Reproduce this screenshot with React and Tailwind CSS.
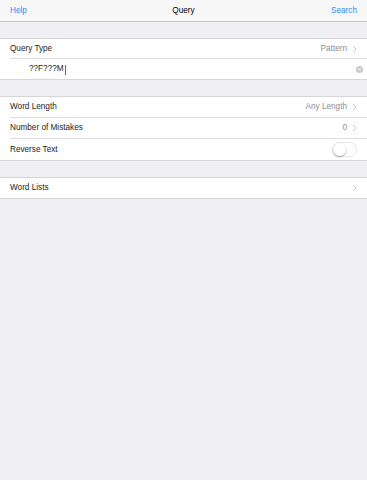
import React, { useState } from "react";

const Chevron = () => (
  <svg width="5" height="8" viewBox="0 0 5 8" className="ml-[5px] shrink-0">
    <path d="M1 1l3 3-3 3" fill="none" stroke="#c7c7cc" strokeWidth="1" />
  </svg>
);

const Row = ({ label, value, chevron = true, last = false, tall = false, children }) => (
  <div
    className={`flex items-stretch bg-white pl-[10px] ${
      tall ? "h-[21px]" : "h-[20px]"
    }`}
  >
    <div
      className={`flex flex-1 items-center pr-[10px] ${
        last ? "" : "border-b border-[#dcdce0]"
      }`}
    >
      <span className="flex-1 pt-[1px] text-[#222]">{label}</span>
      {value && <span className="pt-[1px] text-[#8e8e93]">{value}</span>}
      {chevron && <Chevron />}
      {children}
    </div>
  </div>
);

const Group = ({ children }) => (
  <div className="border-y border-[#d6d6da] bg-white">{children}</div>
);

export default function App() {
  const [reverse, setReverse] = useState(false);

  return (
    <div
      className="min-h-[480px] w-full bg-[#efeff4] text-[8.2px] leading-none"
      style={{ fontFamily: '"Liberation Sans", Arial, sans-serif' }}
    >
      {/* Nav bar */}
      <div className="relative flex h-[22px] items-center justify-between border-b border-[#c4c4c8] bg-[#f7f7f7] px-[10px] pt-[1px]">
        <span className="text-[#2a8af8]">Help</span>
        <span className="absolute left-1/2 -translate-x-1/2 text-black">
          Query
        </span>
        <span className="text-[#2a8af8]">Search</span>
      </div>

      <div className="h-[16px]" />

      <Group>
        <Row label="Query Type" value="Pattern" />
        <div className="flex h-[20px] items-center bg-white pl-[29px] pr-[4px]">
          <span className="flex flex-1 items-center pt-[1px] text-[#222]">
            ??F???M
            <span className="ml-[1px] inline-block h-[10px] w-[1px] bg-[#007aff]" />
          </span>
          <span className="flex h-[7px] w-[7px] items-center justify-center rounded-full bg-[#c7c7cc]">
            <svg width="3" height="3" viewBox="0 0 3 3">
              <path d="M0 0l3 3M3 0l-3 3" stroke="#fff" strokeWidth="0.8" />
            </svg>
          </span>
        </div>
      </Group>

      <div className="h-[16px]" />

      <Group>
        <Row label="Word Length" value="Any Length" tall />
        <Row label="Number of Mistakes" value="0" tall />
        <Row label="Reverse Text" chevron={false} last tall>
          <button
            onClick={() => setReverse(!reverse)}
            className={`relative h-[15px] w-[25px] rounded-full border ${
              reverse ? "border-[#4cd964] bg-[#4cd964]" : "border-[#e5e5ea] bg-white"
            }`}
          >
            <span
              className={`absolute top-0 h-[13px] w-[13px] rounded-full bg-white shadow-[0_1px_2px_rgba(0,0,0,0.35)] ${
                reverse ? "right-0" : "left-0"
              }`}
            />
          </button>
        </Row>
      </Group>

      <div className="h-[16px]" />

      <Group>
        <Row label="Word Lists" last />
      </Group>
    </div>
  );
}
